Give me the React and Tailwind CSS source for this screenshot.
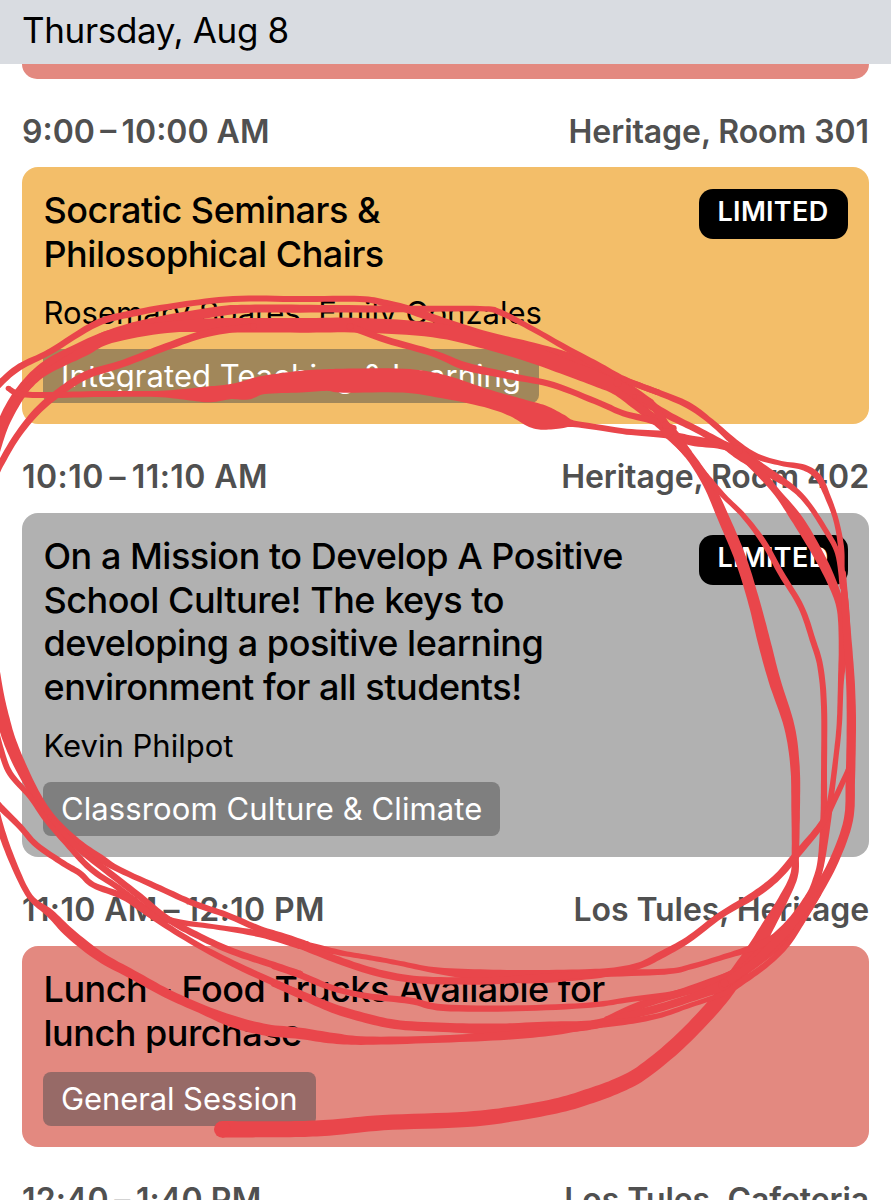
const INK = '#e9464b'

// Each stroke: [originX, originY, ...[x, y, width]] with points in thirds of a pixel.
const strokes = [
  [0, 280, [-30, 350, 20], [0, 310, 20], [60, 260, 20], [150, 215, 18], [290, 130, 20], [400, 100, 20], [540, 75, 18], [700, 57, 18], [900, 57, 18], [1080, 57, 18], [1150, 68, 20], [1230, 90, 24], [1330, 125, 24], [1460, 165, 22], [1600, 200, 24], [1700, 230, 28], [1790, 272, 34], [1873, 318, 30], [1950, 368, 24]],
  [0, 280, [-20, 520, 36], [10, 430, 36], [60, 340, 36], [130, 260, 26], [230, 205, 26], [330, 162, 26], [450, 130, 30], [650, 95, 30], [750, 86, 24], [900, 86, 24], [1200, 87, 20], [1440, 86, 16], [1500, 97, 18], [1600, 148, 16], [1700, 205, 18], [1790, 255, 22], [1873, 298, 18], [1973, 337, 18]],
  [0, 280, [0, 450, 30], [30, 390, 24], [80, 325, 20], [140, 275, 18], [250, 215, 30], [330, 170, 40], [500, 142, 34], [650, 136, 42], [900, 136, 44], [1080, 136, 44], [1300, 150, 44], [1460, 185, 46], [1600, 225, 50], [1700, 262, 48], [1790, 297, 46], [1850, 325, 40], [1910, 375, 30], [1960, 415, 28], [2010, 455, 36], [2063, 520, 26]],
  [0, 280, [-20, 600, 20], [0, 555, 20], [50, 470, 20], [110, 395, 22], [180, 335, 24], [260, 285, 24], [370, 250, 22], [500, 200, 22], [620, 160, 22], [760, 140, 20]],
  [300, 280, [150, 140, 20], [260, 180, 20], [400, 220, 20], [500, 260, 24], [640, 290, 20], [760, 315, 18], [900, 370, 18], [970, 400, 18], [1050, 420, 20], [1120, 445, 20]],
  [0, 280, [25, 325, 16], [60, 342, 18], [150, 345, 18], [300, 342, 18], [470, 342, 18], [560, 343, 34], [630, 343, 48], [690, 335, 45], [740, 330, 58], [790, 315, 55], [900, 305, 65], [980, 300, 65], [1030, 302, 72], [1210, 302, 72], [1330, 320, 70], [1460, 355, 55], [1540, 380, 60], [1600, 405, 76], [1640, 415, 70], [1690, 425, 40], [1720, 431, 20], [1800, 443, 18], [1880, 455, 18], [2005, 465, 22], [2075, 482, 30], [2165, 495, 26], [2240, 520, 26]],
  [591, 340, [100, 120, 18], [200, 157, 18], [290, 195, 20], [360, 245, 18], [440, 315, 22], [500, 350, 18], [570, 370, 15], [640, 383, 18], [682, 412, 20], [710, 470, 18], [735, 540, 16], [750, 620, 18], [754, 700, 16], [764, 800, 20], [768, 900, 22]],
  [591, 340, [80, 128, 24], [170, 190, 26], [240, 230, 22], [320, 270, 20], [400, 315, 24], [450, 345, 34], [520, 390, 28], [600, 440, 18], [650, 490, 16], [700, 565, 16], [740, 640, 16], [755, 740, 18]],
  [591, 340, [230, 275, 36], [290, 340, 26], [350, 430, 30], [400, 540, 35], [450, 660, 35], [490, 790, 35], [518, 900, 38], [550, 1020, 36], [595, 1160, 32], [612, 1280, 28], [614, 1400, 26], [613, 1540, 22], [608, 1610, 24], [570, 1690, 30], [530, 1760, 38], [490, 1830, 45], [440, 1900, 45], [400, 1960, 45], [340, 2030, 45], [250, 2120, 45], [150, 2200, 45], [80, 2237, 45], [0, 2267, 46], [-93, 2295, 45], [-223, 2320, 45], [-373, 2338, 46], [-623, 2348, 46], [-773, 2362, 48], [-873, 2367, 48], [-1000, 2368, 48], [-1106, 2368, 50]],
  [591, 340, [130, 170, 14], [180, 190, 22], [225, 255, 22]],
  [591, 340, [300, 350, 14], [350, 415, 20], [400, 470, 16], [460, 530, 16], [520, 610, 18], [570, 700, 18], [630, 800, 18], [665, 900, 18], [688, 980, 18], [699, 1100, 18], [699, 1300, 18], [698, 1440, 20], [690, 1560, 20], [675, 1620, 20], [655, 1670, 24], [600, 1745, 24], [540, 1810, 34], [480, 1870, 34], [430, 1905, 34], [280, 1955, 24], [150, 1995, 24], [50, 2040, 24]],
  [591, 340, [440, 330, 30], [500, 390, 26], [560, 460, 22], [620, 540, 34], [680, 640, 32], [720, 720, 28], [748, 800, 24], [758, 900, 30], [750, 1020, 18], [745, 1150, 16], [735, 1250, 16], [720, 1370, 18], [705, 1460, 25], [690, 1580, 16], [660, 1670, 22]],
  [591, 340, [756, 700, 18], [768, 880, 24], [778, 1020, 26], [781, 1150, 28], [778, 1320, 28], [772, 1440, 28], [730, 1560, 28], [670, 1670, 30], [610, 1760, 34], [560, 1815, 30], [480, 1880, 24], [400, 1930, 30]],
  [591, 640, [772, 390, 16], [730, 480, 18], [690, 555, 20], [620, 640, 22], [560, 710, 22], [490, 765, 22], [390, 825, 20], [290, 900, 20], [210, 945, 22], [150, 975, 20], [80, 992, 22], [0, 1002, 30], [-170, 1010, 40], [-333, 1005, 34], [-473, 990, 18], [-573, 970, 15], [-653, 955, 15], [-743, 940, 16], [-813, 925, 20], [-880, 910, 24]],
  [591, 900, [560, 110, 26], [480, 145, 20], [400, 170, 16], [300, 200, 16], [220, 215, 18], [0, 222, 22], [-253, 240, 22], [-373, 243, 22], [-533, 238, 22], [-653, 215, 22], [-773, 175, 22], [-873, 135, 22]],
  [591, 900, [440, 215, 26], [380, 245, 30], [260, 280, 20], [120, 298, 16], [0, 315, 16], [-223, 325, 18], [-443, 323, 20], [-543, 302, 20], [-673, 288, 18], [-773, 265, 18], [-873, 225, 20], [-950, 198, 20]],
  [591, 900, [400, 255, 36], [310, 290, 24], [200, 325, 24], [100, 350, 24], [0, 375, 28], [-123, 382, 35], [-273, 388, 35], [-423, 383, 28], [-573, 375, 28], [-673, 355, 28], [-773, 325, 28], [-873, 283, 24], [-950, 250, 22]],
  [591, 900, [680, -20, 22], [640, 50, 20], [590, 130, 18], [530, 190, 18], [460, 240, 20], [400, 280, 16], [300, 315, 14], [200, 348, 16], [100, 365, 20], [0, 375, 24], [-123, 395, 25], [-273, 408, 25], [-473, 418, 22], [-673, 422, 25], [-773, 415, 32], [-873, 400, 34], [-973, 390, 35], [-1073, 365, 35], [-1173, 325, 28], [-1273, 280, 28], [-1373, 225, 28], [-1473, 170, 30], [-1563, 100, 30], [-1623, 40, 25], [-1683, -10, 18], [-1733, -110, 20], [-1773, -220, 22], [-1800, -330, 22]],
  [591, 900, [400, 250, 24], [480, 195, 24], [555, 125, 26], [620, 50, 26], [665, -20, 28]],
  [0, 740, [-18, -240, 24], [-4, -140, 30], [8, -70, 38], [28, 0, 38], [62, 80, 35], [110, 170, 28], [160, 240, 25], [230, 310, 30], [300, 355, 25], [360, 390, 18], [480, 445, 18], [580, 490, 18], [680, 525, 18], [780, 568, 20], [850, 592, 25], [920, 618, 28]],
  [0, 740, [-20, -60, 18], [3, 30, 18], [30, 100, 18], [90, 170, 16], [140, 240, 18], [200, 310, 18], [270, 385, 18], [350, 440, 18], [400, 480, 22], [460, 525, 25], [530, 545, 18], [640, 560, 15], [780, 582, 20], [900, 615, 24]],
  [0, 740, [150, 230, 16], [230, 320, 18], [330, 400, 20], [420, 470, 20], [500, 535, 20], [600, 590, 20], [700, 635, 20], [820, 675, 20], [900, 702, 20]],
  [0, 740, [-20, 175, 20], [0, 200, 20], [60, 260, 18], [110, 315, 18], [190, 370, 18], [240, 400, 18], [280, 435, 18], [370, 470, 20], [440, 515, 22], [500, 558, 18], [620, 630, 18], [750, 695, 20], [900, 762, 22]],
]

function outline([ox, oy, ...raw]) {
  const p = raw.map(([x, y, w]) => [ox + x / 3, oy + y / 3, w / 6])
  const s = []
  for (let i = 0; i < p.length - 1; i++) {
    const a = p[Math.max(0, i - 1)], b = p[i], c = p[i + 1], d = p[Math.min(p.length - 1, i + 2)]
    for (let k = 0; k < 8; k++) {
      const t = k / 8
      s.push([0, 1, 2].map((n) => 0.5 * (2 * b[n] + (c[n] - a[n]) * t + (2 * a[n] - 5 * b[n] + 4 * c[n] - d[n]) * t * t + (3 * b[n] - a[n] - 3 * c[n] + d[n]) * t * t * t)))
    }
  }
  s.push(p[p.length - 1])
  const left = [], right = []
  s.forEach(([x, y, r], i) => {
    const q = s[Math.max(0, i - 1)], n = s[Math.min(s.length - 1, i + 1)]
    const dx = n[0] - q[0], dy = n[1] - q[1], l = Math.hypot(dx, dy) || 1
    left.push(`${(x - (dy / l) * r).toFixed(1)} ${(y + (dx / l) * r).toFixed(1)}`)
    right.unshift(`${(x + (dy / l) * r).toFixed(1)} ${(y - (dx / l) * r).toFixed(1)}`)
  })
  return { d: `M${left.join('L')}L${right.join('L')}Z`, ends: [s[0], s[s.length - 1]] }
}

function Ink() {
  return (
    <svg className="pointer-events-none absolute inset-0" width="891" height="1200" viewBox="0 0 891 1200" fill={INK} aria-hidden="true">
      {strokes.map((stroke, i) => {
        const { d, ends } = outline(stroke)
        return (
          <g key={i}>
            <path d={d} />
            {ends.map(([x, y, r], k) => <circle key={k} cx={x} cy={y} r={r} />)}
          </g>
        )
      })}
    </svg>
  )
}

function SlotHeader({ time, place, height = 'h-[89px]', timeTracking = 'tracking-normal' }) {
  return (
    <div className={`flex shrink-0 items-center justify-between pt-[17px] text-[32px] font-semibold whitespace-pre text-[#505050] ${height}`}>
      <span className={timeTracking}>{time}</span>
      <span className="tracking-[-0.08px]">{place}</span>
    </div>
  )
}

function Card({ color, tagColor, title, speaker, tag, tagSpacing, limited, height }) {
  return (
    <article className={`flex shrink-0 items-start justify-between rounded-2xl px-[21.5px] pt-[22px] ${color} ${height}`}>
      <div className="flex flex-col items-start whitespace-pre text-black">
        <h2 className="text-[36px] leading-[43.5px] font-medium tracking-[-0.48px]">{title}</h2>
        {speaker && <p className="mt-[18px] text-[31px] leading-[38px]">{speaker}</p>}
        <span className={`-ml-[0.5px] flex h-[54px] items-center rounded-lg px-[18px] text-[31px] text-white ${tagSpacing} ${tagColor}`}>{tag}</span>
      </div>
      {limited && <span className="-mt-[0.5px] flex h-[50px] w-[149px] items-center justify-center rounded-[14px] bg-black pb-[3px] text-[27px] font-semibold tracking-[0.3px] text-white">LIMITED</span>}
    </article>
  )
}

export default function App() {
  return (
    <main className="relative flex h-[1200px] w-[891px] flex-col overflow-hidden bg-white font-['Inter',sans-serif]">
      <header className="flex h-16 shrink-0 items-center bg-[#d9dce1] px-[22px] pb-[3px] text-[35px] tracking-[-0.35px] text-black">Thursday, Aug 8</header>
      <div className="flex flex-col px-[22px]">
        <div className="h-[15px] shrink-0 rounded-b-2xl bg-[#e38980]" />
        <SlotHeader height="h-[88px]" time={'9:00\u2009–\u200910:00 AM'} place="Heritage, Room 301" />
        <Card height="h-[257px]" color="bg-[#f3be69]" tagColor="bg-[#a1875a]" tagSpacing="mt-[17px] tracking-[0.05px]" title={'Socratic Seminars &\nPhilosophical Chairs'} speaker="Rosemary Soares, Emily Gonzales" tag="Integrated Teaching & Learning" limited />
        <SlotHeader timeTracking="tracking-[0.45px]" time={'10:10\u2009–\u200911:10 AM'} place="Heritage, Room 402" />
        <Card height="h-[344px]" color="bg-[#b1b1b1]" tagColor="bg-[#7f7f7f]" tagSpacing="mt-[17px] tracking-[0.1px]" title={'On a Mission to Develop A Positive\nSchool Culture! The keys to\ndeveloping a positive learning\nenvironment for all students!'} speaker="Kevin Philpot" tag="Classroom Culture & Climate" limited />
        <SlotHeader timeTracking="tracking-[0.37px]" time={'11:10 AM\u2009–\u200912:10 PM'} place="Los Tules, Heritage" />
        <Card height="h-[201px]" color="bg-[#e38980]" tagColor="bg-[#976a67]" tagSpacing="mt-[17px] tracking-[-0.1px]" title={'Lunch - Food Trucks Available for\nlunch purchase'} tag="General Session" />
        <SlotHeader timeTracking="tracking-[0.15px]" time={'12:40\u2009–\u20091:40 PM'} place="Los Tules, Cafeteria" />
      </div>
      <Ink />
    </main>
  )
}
